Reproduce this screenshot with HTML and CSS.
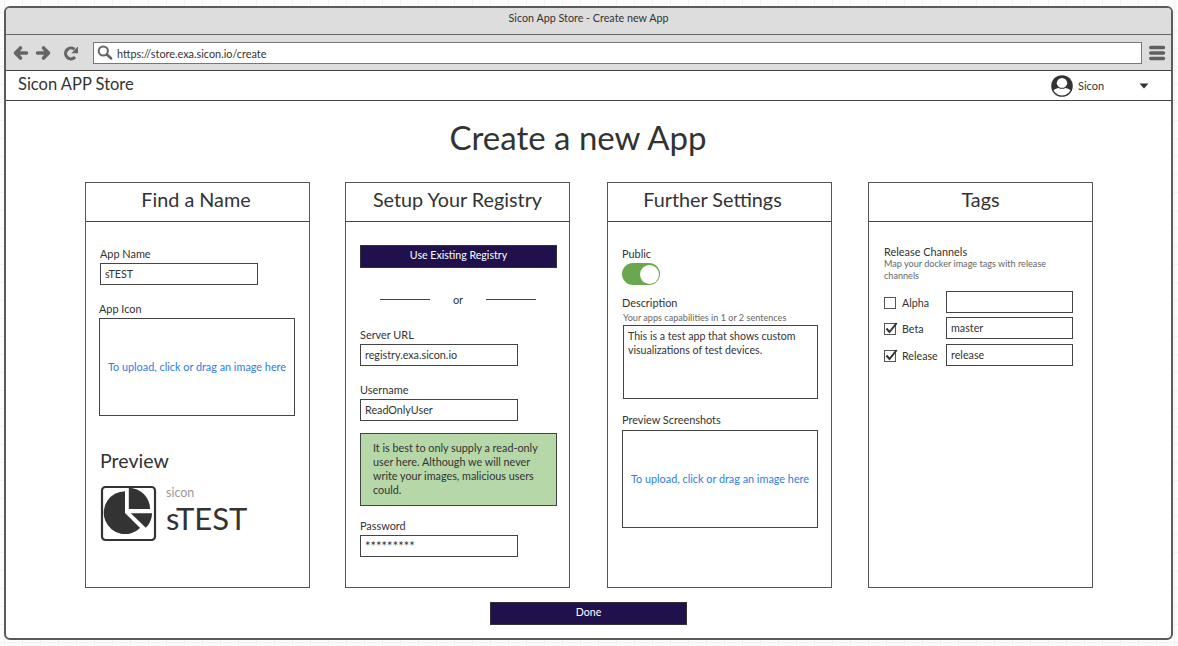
FILE: index.html
```html
<!DOCTYPE html>
<html lang="en">
<head>
<meta charset="utf-8">
<title>Sicon App Store - Create new App</title>
<link rel="stylesheet" href="styles.css">
</head>
<body>
<div class="window">
  <div class="titlebar"><span class="t-title">Sicon App Store - Create new App</span></div>
  <div class="toolbar">
    <svg class="nav-icons" width="68" height="18" viewBox="0 0 68 18" fill="none" stroke="#666" stroke-width="3.6" stroke-linecap="round" stroke-linejoin="round">
      <path d="M8.500 4 L3.500 9 L8.500 14 M4 9 H14.500"/>
      <path d="M31.500 4 L36.500 9 L31.500 14 M36 9 H25.500"/>
      <path d="M63 13 A5.400 5.400 0 1 1 62.500 5.300" stroke-width="3.200" stroke-linecap="butt"/>
      <path d="M66 2.600 V9.300 H59.300 Z" fill="#666" stroke="none"/>
    </svg>
    <div class="urlbar">
      <svg width="17" height="16" viewBox="0 0 17 16" fill="none" stroke="#666"><circle cx="6.300" cy="6" r="4.600" stroke-width="2"/><path d="M9.800 9.500 L14 13.300" stroke-width="2.800" stroke-linecap="round"/></svg>
      <span class="t-url">https://store.exa.sicon.io/create</span>
    </div>
    <svg class="burger" width="17" height="16" viewBox="0 0 17 16" stroke="#5f5f5f" stroke-width="3.400" stroke-linecap="round"><path d="M1.700 2.500 H14.500 M1.700 8 H14.500 M1.700 13.500 H14.500"/></svg>
  </div>
  <div class="header">
    <span class="brand">Sicon APP Store</span>
    <div class="user">
      <svg width="22" height="22" viewBox="0 0 22 22"><defs><clipPath id="face"><circle cx="11" cy="11" r="9.500"/></clipPath></defs><circle cx="11" cy="11" r="10.800" fill="#333"/><g clip-path="url(#face)"><path d="M1 23 V17 C2.500 14.500 5 13.600 7.500 13 H14.500 C17 13.600 19.500 14.500 21 17 V23 Z" fill="#fff"/></g><circle cx="11" cy="8.300" r="5.200" fill="#fff"/><path d="M6.200 10.300 C7.500 14.300 14.500 14.300 15.800 10.300" fill="none" stroke="#333" stroke-width="1.100"/></svg>
      <span class="user-name">Sicon</span>
      <svg class="caret" width="10" height="6" viewBox="0 0 10 6"><path d="M0.500 0.500 H9.500 L5 5.500 Z" fill="#333"/></svg>
    </div>
  </div>
  <h1>Create a new App</h1>
  <div class="panels">
    <section class="panel">
      <h2 class="h-find">Find a Name</h2>
      <div class="body">
        <label class="l-name">App Name</label>
        <div class="input">sTEST</div>
        <label class="l-icon">App Icon</label>
        <div class="drop"><span>To upload, click or drag an image here</span></div>
        <h3>Preview</h3>
        <div class="preview">
          <svg width="57" height="57" viewBox="0 0 57 57" fill="#333"><rect x="2" y="2" width="53" height="53" rx="3.500" fill="#fff" stroke="#333" stroke-width="2.200"/><path d="M25 6.300 A21.400 21.400 0 1 0 40.100 43 L25 28 Z"/><path d="M28.800 2.800 A21.300 21.300 0 0 1 50.100 24 H28.800 Z"/><path d="M30.800 28.200 H52.100 A21 21 0 0 1 45.800 42.700 Z"/></svg>
          <div class="preview-text"><span class="owner">sicon</span><span class="app">sTEST</span></div>
        </div>
      </div>
    </section>
    <section class="panel second">
      <h2 class="h-setup">Setup Your Registry</h2>
      <div class="body">
        <div class="button"><span class="t-use">Use Existing Registry</span></div>
        <div class="or"><i></i><span>or</span><i></i></div>
        <label class="l-server">Server URL</label>
        <div class="input t-reg">registry.exa.sicon.io</div>
        <label class="l-user">Username</label>
        <div class="input">ReadOnlyUser</div>
        <div class="note">It is best to only supply a read-only<br>user here. Although we will never<br>write your images, malicious users<br>could.</div>
        <label class="l-pass">Password</label>
        <div class="input stars">*********</div>
      </div>
    </section>
    <section class="panel third">
      <h2 class="h-further">Further Settings</h2>
      <div class="body">
        <label class="l-public">Public</label>
        <div class="toggle"><i></i></div>
        <label class="l-desc">Description</label>
        <div class="hint h-desc">Your apps capabilities in 1 or 2 sentences</div>
        <div class="textarea">This is a test app that shows custom<br>visualizations of test devices.</div>
        <label class="l-shots">Preview Screenshots</label>
        <div class="drop shots"><span>To upload, click or drag an image here</span></div>
      </div>
    </section>
    <section class="panel fourth">
      <h2 class="h-tags">Tags</h2>
      <div class="body">
        <label class="l-channels">Release Channels</label>
        <div class="hint h-channels">Map your docker image tags with release<br>channels</div>
        <div class="channels">
          <div class="channel"><svg width="16" height="14" viewBox="0 0 16 14" fill="none" stroke="#555"><rect x="0.500" y="2.500" width="11" height="11"/></svg><span class="c-name">Alpha</span><div class="input"></div></div>
          <div class="channel"><svg width="16" height="14" viewBox="0 0 16 14" fill="none" stroke="#555"><rect x="0.500" y="2.500" width="11" height="11"/><path d="M2.500 7.500 L5.500 11 L12.700 2" stroke="#333" stroke-width="2"/></svg><span class="c-name">Beta</span><div class="input">master</div></div>
          <div class="channel last"><svg width="16" height="14" viewBox="0 0 16 14" fill="none" stroke="#555"><rect x="0.500" y="2.500" width="11" height="11"/><path d="M2.500 7.500 L5.500 11 L12.700 2" stroke="#333" stroke-width="2"/></svg><span class="c-name">Release</span><div class="input">release</div></div>
        </div>
      </div>
    </section>
  </div>
  <div class="button done"><span>Done</span></div>
</div>
</body>
</html>
```

FILE: styles.css
```css
* { box-sizing: border-box; }
body {
  margin: 0;
  width: 1178px;
  height: 646px;
  overflow: hidden;
  padding: 6px 0 0 4px;
  font-family: Lato, sans-serif;
  font-size: 11px;
  color: #333;
  background-color: #fbfbfb;
  background-image:
    linear-gradient(90deg, #f1f1f1 1px, transparent 1px),
    linear-gradient(#f1f1f1 1px, transparent 1px);
  background-size: 18px 18px;
  background-position: 4px 12px;
}
span { white-space: nowrap; }
svg { display: block; flex: none; }
h1, h2, h3 { margin: 0; font-weight: 400; }
.window {
  width: 1169px;
  height: 634px;
  border: 2px solid #5a5a5a;
  border-radius: 6px;
  background: #fff;
  overflow: hidden;
}
.titlebar {
  height: 27px;
  background: #ddd;
  border-bottom: 1px solid #666;
  line-height: 20px;
  font-size: 10.75px;
  text-align: center;
}
.toolbar {
  height: 36px;
  background: #ddd;
  border-bottom: 1px solid #444;
  display: flex;
  align-items: flex-start;
  padding: 7px 0 0 6px;
}
.nav-icons { margin-top: 2px; }
.urlbar {
  width: 1049px;
  height: 22px;
  margin-left: 13px;
  border: 1px solid #777;
  background: #fff;
  display: flex;
  align-items: center;
  padding-left: 3px;
  gap: 3px;
}
.t-url { font-size: 10.85px; }
.burger { margin: 3px 0 0 7px; }
.header {
  height: 30px;
  border-bottom: 1px solid #444;
  display: flex;
  justify-content: space-between;
  align-items: center;
  padding: 0 22px 0 12px;
}
.brand { font-size: 16.5px; line-height: 26px; padding-bottom: 3px; }
.user { display: flex; align-items: center; }
.user-name { margin: -1px 0 0 5px; width: 61px; }
h1 {
  height: 81px;
  line-height: 72px;
  font-size: 33px;
  text-align: center;
  padding-right: 21px;
}
.panels { display: flex; padding-left: 79px; }
.panel { width: 225px; height: 406px; border: 1px solid #555; background: #fff; }
.second { margin-left: 35px; }
.third { margin-left: 37px; }
.fourth { margin-left: 36px; }
h2 {
  height: 39px;
  border-bottom: 1px solid #444;
  font-size: 19.8px;
  line-height: 33px;
  text-align: center;
  padding-right: 3px;
}
.h-setup { padding-right: 0; }
.h-further { padding-right: 14px; }
.h-tags { padding-right: 0; }
.body { padding: 24px 0 0 14px; }
.second .body { padding-top: 23px; }
.fourth .body { padding: 22px 0 0 15px; }
label { display: block; height: 16px; line-height: 16px; font-size: 10.9px; }
.input {
  width: 158px;
  height: 22px;
  border: 1px solid #444;
  background: #fff;
  line-height: 20px;
  padding-left: 4px;
  margin-top: 1px;
  font-size: 10.75px;
}
.l-icon { margin: 16px 0 0 -1px; }
.drop {
  width: 196px;
  height: 98px;
  margin: 1px 0 0 -1px;
  border: 1px solid #444;
  display: flex;
  align-items: center;
  justify-content: center;
  padding-bottom: 2px;
  font-size: 10.85px;
  color: #2f7be5;
}
h3 { font-size: 19.6px; line-height: 24px; margin-top: 33px; }
.preview { display: flex; margin-top: 12px; gap: 9px; }
.preview-text { display: flex; flex-direction: column; }
.owner { font-size: 12.5px; line-height: 16px; color: #999; }
.app { font-size: 31px; line-height: 34px; }
.button {
  width: 197px;
  height: 23px;
  background: #20114d;
  border: 1px solid #333;
  color: #fff;
  text-align: center;
  line-height: 19px;
  font-size: 10.6px;
}
.or { display: flex; align-items: center; height: 16px; margin: 23px 0 0 20px; }
.or i { width: 50px; height: 1px; background: #444; }
.or span { width: 56px; text-align: center; }
.l-server { margin-top: 20px; }
.l-user { margin-top: 16px; }
.stars { font-size: 13px; line-height: 21px; }
.note {
  width: 197px;
  height: 73px;
  margin-top: 12px;
  border: 1px solid #444;
  background: #b6d7a8;
  padding: 7px 0 0 12px;
  line-height: 14px;
  font-size: 10.8px;
  white-space: nowrap;
}
.l-pass { margin-top: 12px; }
.toggle {
  width: 38px;
  height: 22px;
  margin-top: 1px;
  border-radius: 11px;
  background: #6aa84f;
  display: flex;
  justify-content: flex-end;
  padding: 1.5px;
}
.toggle i { width: 19px; height: 19px; border-radius: 50%; background: #fff; }
.l-desc { margin-top: 10px; }
.hint { font-size: 9.1px; color: #666; white-space: nowrap; }
.h-desc { line-height: 13px; margin: 0 0 1px 1px; }
.textarea {
  width: 195px;
  height: 74px;
  border: 1px solid #444;
  margin-left: 1px;
  padding: 3px 0 0 4px;
  line-height: 14px;
  font-size: 10.6px;
  white-space: nowrap;
}
.l-shots { margin-top: 13px; }
.shots { margin: 2px 0 0 0; }
.h-channels { line-height: 12px; margin-top: -2px; }
.channels { margin-top: 9px; }
.channel { display: flex; align-items: center; margin-bottom: 4px; height: 22px; }
.last { margin-top: 5px; }
.c-name { width: 44px; margin-left: 2px; font-size: 10.7px; }
.channel .input { width: 127px; margin: 0; }
.done { margin: 14px 0 0 484px; }
```
